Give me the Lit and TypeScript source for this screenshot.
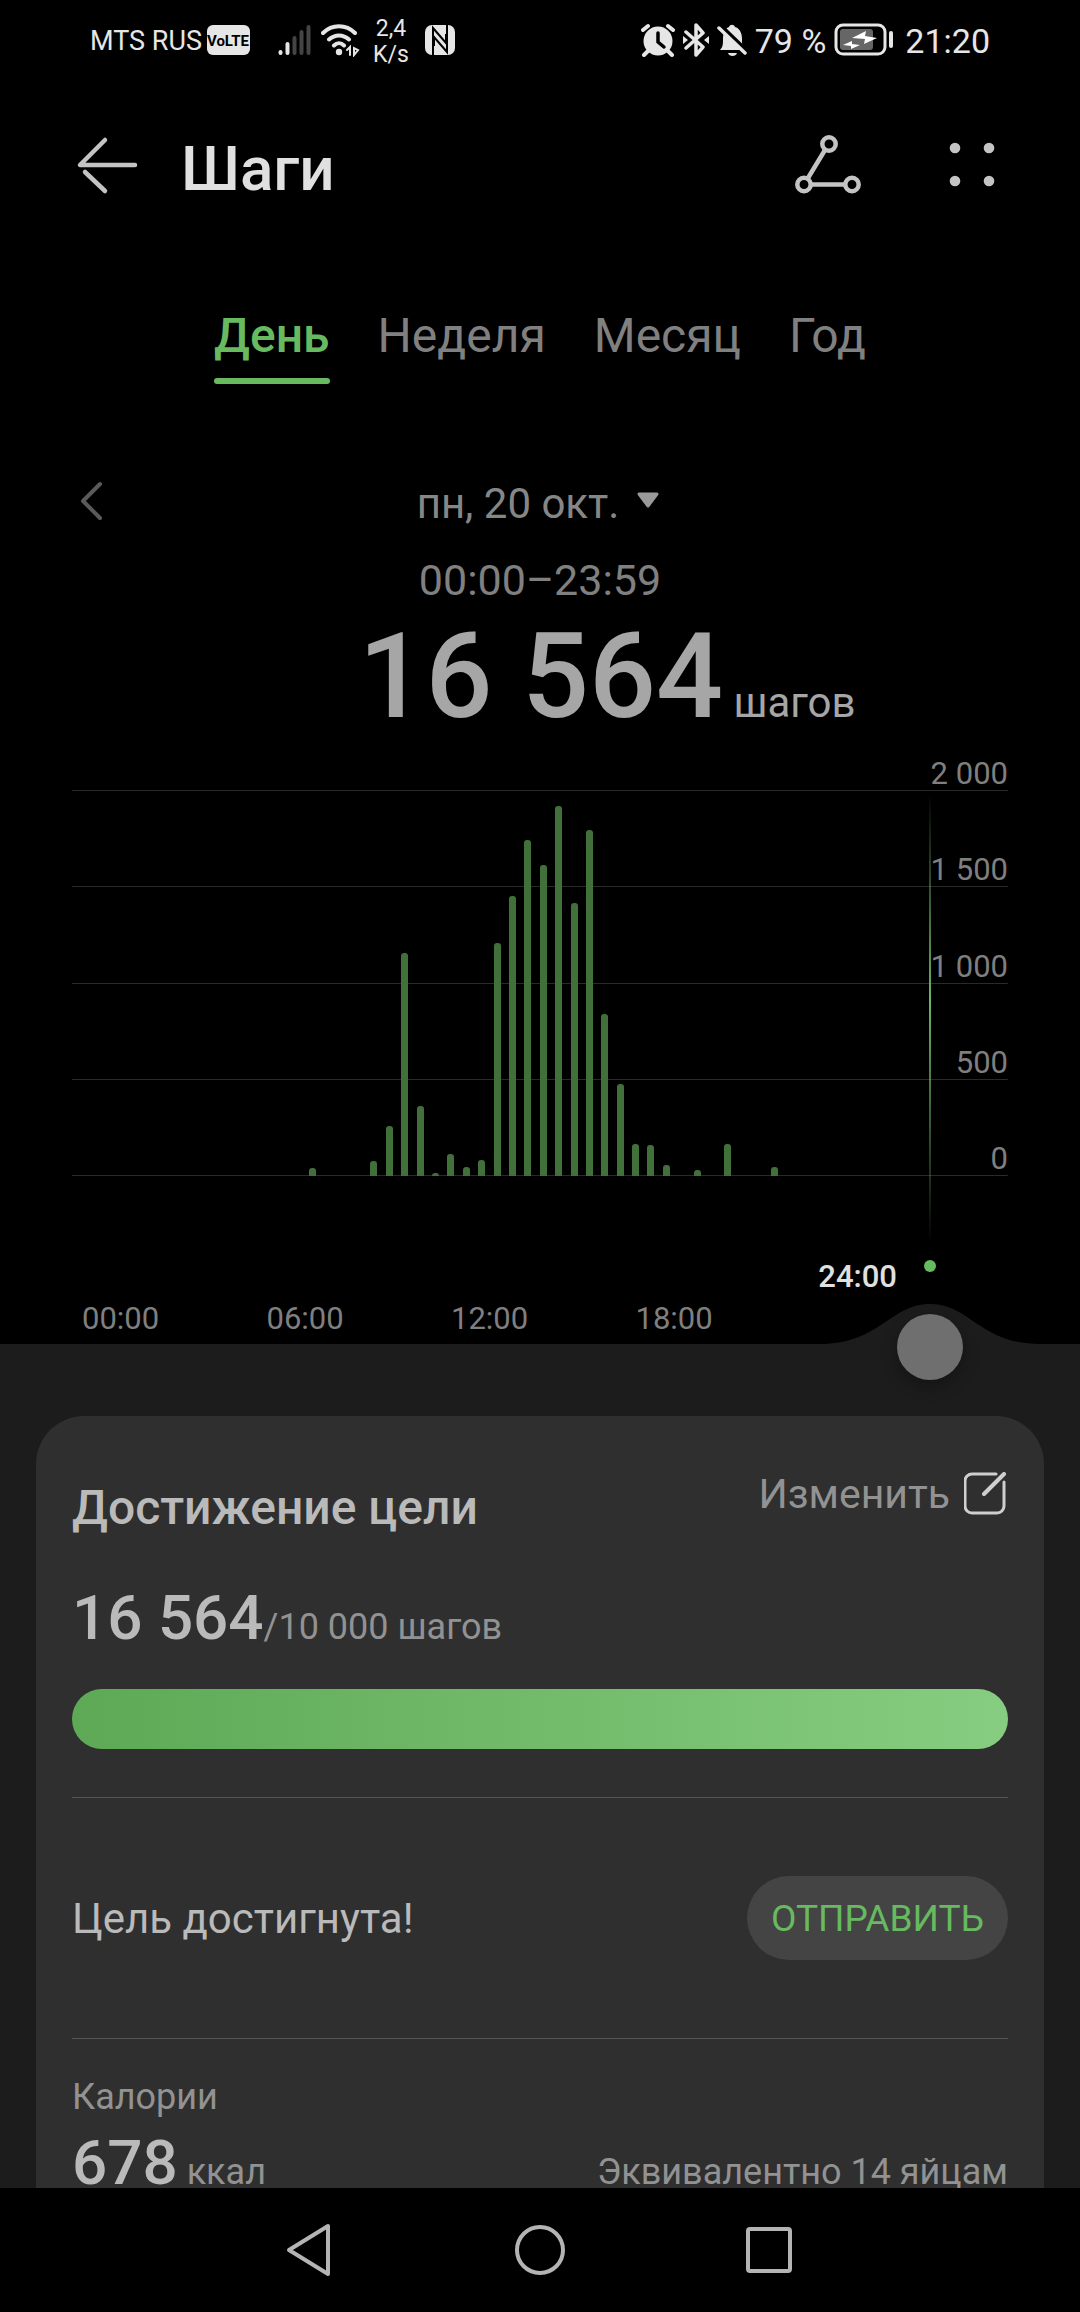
import { LitElement, html, css } from "lit";
import { customElement, property, state } from "lit/decorators.js";
import { classMap } from "lit/directives/class-map.js";

const HALF_HOURS = 48;
const MAX_STEPS = 2000;

/* Steps per half hour, keyed by the slot index counted from midnight. */
const STEPS: Record<number, number> = {
  12: 42, 16: 78, 17: 260, 18: 1158, 19: 364, 20: 16, 21: 114, 22: 47, 23: 85,
  24: 1205, 25: 1450, 26: 1740, 27: 1610, 28: 1915, 29: 1417, 30: 1795, 31: 842,
  32: 478, 33: 166, 34: 161, 35: 57, 37: 31, 39: 166, 42: 49,
};

@customElement("status-bar")
class StatusBar extends LitElement {
  static styles = css`
    :host { display: flex; align-items: center; justify-content: space-between; height: 80px; padding: 0 90px; color: #e6e6e6; }
    .group { display: flex; align-items: center; }
    .carrier { font-size: 27px; line-height: 32px; padding-top: 2px; }
    .rate { font-size: 23px; line-height: 26px; text-align: center; width: 36px; margin: 4px 16px 0 12px; }
    .num { font-size: 34px; line-height: 40px; padding-top: 2px; }
    .volte { margin-left: 5px; }
    .signal { margin-left: 27px; }
    .wifi { margin-left: 10px; }
    .bt { margin-left: 8px; }
    .bell { margin: 0 8px; }
    .battery { margin: 0 10px 0 8px; }
    svg { display: block; }
  `;
  render() {
    return html`
      <div class="group">
        <span class="carrier">MTS RUS</span>
        <svg class="volte" width="44" height="30" viewBox="0 0 44 30" role="img" aria-label="VoLTE">
          <rect width="43" height="30" rx="6" fill="#e6e6e6" />
          <text x="21" y="21" text-anchor="middle" font-family="Roboto, sans-serif" font-weight="700" font-size="15" fill="#000">VoLTE</text>
        </svg>
        <svg class="signal" width="33" height="32" viewBox="0 0 33 32" stroke-width="4" stroke-linecap="round" aria-hidden="true">
          <path d="M2.500 28v1M9.500 20v9" stroke="#e6e6e6" />
          <path d="M16.500 14v15M23.500 8v21M30.500 3v26" stroke="#444" />
        </svg>
        <svg class="wifi" width="40" height="34" viewBox="0 0 40 34" fill="none" stroke="#e6e6e6" stroke-width="4" stroke-linecap="round" aria-hidden="true">
          <path d="M2 10C11 1 25 1 34 10M8 16.500C14 11 22 11 28 16.500M13 22.500C16 19.500 20 19.500 23 22.500" />
          <circle cx="18" cy="29" r="3.200" fill="#e6e6e6" stroke="none" />
          <path d="M26 27l3-3v8M33 32v-7l4 2z" stroke-width="2" />
        </svg>
        <span class="rate">2,4<br />K/s</span>
        <svg width="30" height="30" viewBox="0 0 30 30" aria-hidden="true">
          <rect width="30" height="30" rx="7" fill="#e6e6e6" />
          <path d="M8 30V3L21 18V9M22 0V27L9 12V21" fill="none" stroke="#000" stroke-width="2" />
        </svg>
      </div>
      <div class="group">
        <svg width="34" height="34" viewBox="0 0 34 34" aria-hidden="true">
          <circle cx="17" cy="18" r="14.500" fill="#e6e6e6" />
          <path d="M2 7l5-4M32 7l-5-4M7 28l-4 4M27 28l4 4" stroke="#e6e6e6" stroke-width="4" stroke-linecap="round" />
          <path d="M17 10v9l6 5" stroke="#000" stroke-width="3.500" fill="none" stroke-linecap="round" />
        </svg>
        <svg class="bt" width="26" height="34" viewBox="0 0 26 34" fill="none" stroke="#e6e6e6" stroke-width="3.500" stroke-linejoin="round" stroke-linecap="round" aria-hidden="true">
          <path d="M3 9l17 15-7 8V2l7 8L3 25" />
          <path d="M0 13v8l5-4zM26 13v8l-5-4z" fill="#e6e6e6" stroke="none" />
        </svg>
        <svg class="bell" width="30" height="34" viewBox="0 0 30 34" aria-hidden="true">
          <path d="M3 27c3-3 3-6 3-11C6 9 9 5 12 4c1-3 5-3 6 0 4 1 7 5 7 12 0 5 0 8 3 11z" fill="#e6e6e6" />
          <path d="M11 30h9c-1 4-8 4-9 0z" fill="#e6e6e6" />
          <path d="M4 3l26 25" stroke="#000" stroke-width="4" />
          <path d="M2 5l26 25" stroke="#e6e6e6" stroke-width="3.500" stroke-linecap="round" />
        </svg>
        <span class="num">79 %</span>
        <svg class="battery" width="61" height="34" viewBox="0 0 61 34" aria-hidden="true">
          <rect x="2" y="2" width="49" height="29" rx="7" fill="none" stroke="#e6e6e6" stroke-width="3" />
          <rect x="6" y="6" width="33" height="21" rx="3" fill="#666" />
          <path d="M57 10v13" stroke="#e6e6e6" stroke-width="4" stroke-linecap="round" />
          <path d="M18 15l14-7-1 5 12 2-13 6 1-5zM9 22l9-4v3l8 1-9 4v-3z" fill="#fff" />
        </svg>
        <span class="num">21:20</span>
      </div>
    `;
  }
}

@customElement("steps-chart")
class StepsChart extends LitElement {
  @property({ type: Number }) time = 24;
  static styles = css`
    :host { display: block; position: relative; padding: 20px 72px 0; }
    .plot { position: relative; margin-top: 30px; height: 386px; }
    .grid { height: 100%; display: flex; flex-direction: column; justify-content: space-between; }
    .line { height: 1px; background: #2a2a2a; display: flex; align-items: flex-end; justify-content: flex-end; color: #7f7f7f; font-size: 31px; line-height: 34px; }
    .bars { position: absolute; inset: 0 149px 0 48px; display: flex; align-items: flex-end; }
    .slot { flex: 1; height: 100%; display: flex; align-items: flex-end; justify-content: center; }
    .bar { width: 7px; border-radius: 3px 3px 0 0; background: #41703b; }
    .hours { display: flex; margin: 128px 0 0; padding: 0 188px 10px 10px; color: #7f7f7f; font-size: 31px; line-height: 30px; }
    .hour { flex: 1; }
    .cursor { position: absolute; right: 149px; top: 54px; width: 2px; height: 450px; background: linear-gradient(transparent, #6fb568 46%, transparent); }
    .dot { position: absolute; right: 144px; top: 520px; width: 12px; height: 12px; border-radius: 50%; background: #67ba5f; }
    .now { position: absolute; right: 183px; top: 515px; color: #e0e0e0; font-size: 31px; line-height: 44px; font-weight: 500; }
    .hill { position: absolute; right: 40px; bottom: 0; display: block; }
    .handle { position: absolute; right: 117px; bottom: -36px; width: 66px; height: 66px; padding: 0; border: 0; border-radius: 50%; background: #6f6f6f; box-shadow: 0 6px 16px rgba(0, 0, 0, 0.3); z-index: 1; }
  `;
  render() {
    return html`
      <div class="plot">
        <div class="grid">
          ${["2 000", "1 500", "1 000", "500", "0"].map((v) => html`<div class="line"><span>${v}</span></div>`)}
        </div>
        <div class="bars">
          ${Array.from({ length: HALF_HOURS }, (_, i) => html`<div class="slot">
            ${STEPS[i] ? html`<div class="bar" style="height:${(STEPS[i] / MAX_STEPS) * 100}%"></div>` : null}
          </div>`)}
        </div>
      </div>
      <div class="hours">
        ${["00:00", "06:00", "12:00", "18:00"].map((h) => html`<span class="hour">${h}</span>`)}
      </div>
      <div class="cursor"></div>
      <div class="dot"></div>
      <span class="now">${this.time}:00</span>
      <svg class="hill" width="220" height="40" viewBox="0 0 220 40" aria-hidden="true">
        <path d="M0 40C60 40 70 0 110 0S160 40 220 40z" fill="#1c1c1c" />
      </svg>
      <button class="handle" aria-label="Выбор времени"></button>
    `;
  }
}

@customElement("goal-card")
class GoalCard extends LitElement {
  static styles = css`
    :host { display: block; margin: 72px 36px 0; padding: 0 36px; border-radius: 48px 48px 0 0; background: #2f2f2f; color: #bababa; }
    .head { display: flex; justify-content: space-between; padding-top: 48px; }
    h2 { margin: 14px 0 0; font-size: 48px; line-height: 60px; font-weight: 500; }
    button { font-family: inherit; border: 0; margin: 0; cursor: pointer; }
    .edit { display: flex; align-items: center; gap: 14px; padding: 0; height: 60px; background: none; color: #929292; font-size: 41px; }
    .total { margin: 38px 0 0; line-height: 36px; font-size: 36px; color: #929292; }
    .big { font-size: 62px; line-height: 84px; font-weight: 500; color: #bababa; }
    .meter { height: 60px; margin-top: 29px; border-radius: 30px; background: linear-gradient(90deg, #5da955, #87cd81); }
    .row { display: flex; align-items: center; justify-content: space-between; height: 240px; margin-top: 48px; border: solid #555; border-width: 1px 0; font-size: 42px; }
    .send { height: 84px; padding: 0 24px; border-radius: 42px; background: #444; color: #67ba5f; font-size: 37px; }
    .label { margin: 34px 0 0; font-size: 36px; line-height: 48px; color: #929292; }
    .cal { display: flex; align-items: baseline; justify-content: space-between; line-height: 36px; font-size: 36px; color: #929292; }
  `;
  render() {
    return html`
      <div class="head">
        <h2>Достижение цели</h2>
        <button class="edit">
          Изменить
          <svg width="44" height="44" viewBox="0 0 44 44" fill="none" stroke="#cfcfcf" stroke-width="3" stroke-linecap="round" aria-hidden="true">
            <path d="M32 2H8a7 7 0 0 0-7 7v25a7 7 0 0 0 7 7h25a7 7 0 0 0 7-7V10" />
            <path d="M20 22L40 2" stroke-width="4" />
          </svg>
        </button>
      </div>
      <p class="total"><span class="big">16 564</span>/10 000 шагов</p>
      <div class="meter" role="progressbar" aria-label="Достижение цели" aria-valuenow="100" aria-valuemin="0" aria-valuemax="100"></div>
      <div class="row">
        <span>Цель достигнута!</span>
        <button class="send">ОТПРАВИТЬ</button>
      </div>
      <p class="label">Калории</p>
      <div class="cal">
        <span><span class="big">678</span> ккал</span>
        <span>Эквивалентно 14 яйцам</span>
      </div>
    `;
  }
}

@customElement("app-root")
class AppRoot extends LitElement {
  @state() private tab = "День";
  static styles = css`
    :host { display: flex; flex-direction: column; height: 100vh; overflow: hidden; background: #000; font-family: Roboto, "Noto Sans", sans-serif; }
    button { font-family: inherit; border: 0; margin: 0; padding: 0; background: none; cursor: pointer; }
    svg { display: block; overflow: visible; }
    .header { display: flex; align-items: center; padding: 0 80px 0 76px; height: 172px; color: #e0e0e0; }
    h1 { flex: 1; margin: 0 0 0 41px; padding-top: 4px; font-size: 62px; font-weight: 500; }
    .more { margin-left: 84px; }
    .tabs { display: flex; justify-content: center; gap: 48px; padding-top: 48px; }
    .tab { position: relative; font-size: 48px; line-height: 72px; padding-bottom: 12px; color: #808080; }
    .active { color: #67ba5f; font-weight: 500; }
    .active::after { content: ""; position: absolute; left: 0; right: 0; bottom: 0; height: 6px; border-radius: 3px; background: #67ba5f; }
    .date { display: grid; grid-template-columns: 1fr auto 1fr; align-items: center; padding: 84px 84px 0 80px; height: 72px; }
    .pick { display: flex; align-items: center; gap: 18px; color: #868686; font-size: 42px; line-height: 72px; }
    .range { margin: 0; text-align: center; color: #808080; font-size: 43px; line-height: 80px; }
    .steps { margin: 0; padding: 1px 0 7px 134px; text-align: center; color: #a6a6a6; font-size: 42px; line-height: 40px; }
    .count { font-size: 118px; line-height: 112px; font-weight: 500; }
    main { flex: 1; min-height: 0; overflow: hidden; }
    .sheet { background: #1c1c1c; display: flow-root; }
    .nav { display: flex; justify-content: center; gap: 178px; align-items: center; height: 124px; background: #000; }
  `;
  render() {
    return html`
      <status-bar></status-bar>
      <header class="header">
        <button aria-label="Назад">
          <svg width="64" height="64" viewBox="0 0 64 64" fill="none" stroke="#c4c4c4" stroke-width="4.500" stroke-linecap="round" stroke-linejoin="round">
            <path d="M29 6L4 31H59" /><path d="M9 38L29 57" />
          </svg>
        </button>
        <h1>Шаги</h1>
        <button aria-label="Маршрут">
          <svg width="68" height="62" viewBox="0 0 68 62" fill="none" stroke="#c4c4c4" stroke-width="4.500">
            <circle cx="37" cy="9" r="6.700" /><circle cx="12" cy="49.500" r="6.700" /><circle cx="60" cy="49.500" r="6.700" />
            <path d="M33 15L16 43M19 49.500H53" />
          </svg>
        </button>
        <button class="more" aria-label="Ещё">
          <svg width="56" height="62" viewBox="0 0 56 62" fill="#c4c4c4">
            <circle cx="11" cy="13" r="5.300" /><circle cx="45" cy="13" r="5.300" /><circle cx="11" cy="46" r="5.300" /><circle cx="45" cy="46" r="5.300" />
          </svg>
        </button>
      </header>
      <main>
        <div class="tabs" role="tablist">
          ${["День", "Неделя", "Месяц", "Год"].map((t) => html`<button role="tab" aria-selected=${t === this.tab}
            class=${classMap({ tab: true, active: t === this.tab })} @click=${() => (this.tab = t)}>${t}</button>`)}
        </div>
        <div class="date">
          <button aria-label="Предыдущий день">
            <svg width="24" height="44" viewBox="0 0 24 44" fill="none" stroke="#5a5a5a" stroke-width="4" stroke-linecap="round" stroke-linejoin="round"><path d="M20 2L3 19L20 36" /></svg>
          </button>
          <button class="pick">пн, 20 окт.
            <svg width="22" height="24" viewBox="0 0 22 24" fill="#999" stroke="#999" stroke-width="3" stroke-linejoin="round"><path d="M2 2H20L11 14z" /></svg>
          </button>
        </div>
        <p class="range">00:00–23:59</p>
        <p class="steps"><span class="count">16 564</span> шагов</p>
        <steps-chart></steps-chart>
        <div class="sheet"><goal-card></goal-card></div>
      </main>
      <nav class="nav">
        <button aria-label="Назад">
          <svg width="50" height="56" viewBox="0 0 50 56" fill="none" stroke="#b4b4b4" stroke-width="4" stroke-linejoin="round"><path d="M43 4V52L4 28z" /></svg>
        </button>
        <button aria-label="Домой">
          <svg width="54" height="56" viewBox="0 0 54 56" fill="none" stroke="#b4b4b4" stroke-width="4"><circle cx="27" cy="28" r="23" /></svg>
        </button>
        <button aria-label="Недавние">
          <svg width="50" height="56" viewBox="0 0 50 56" fill="none" stroke="#b4b4b4" stroke-width="4"><rect x="3" y="7" width="42" height="42" rx="2" /></svg>
        </button>
      </nav>
    `;
  }
}
